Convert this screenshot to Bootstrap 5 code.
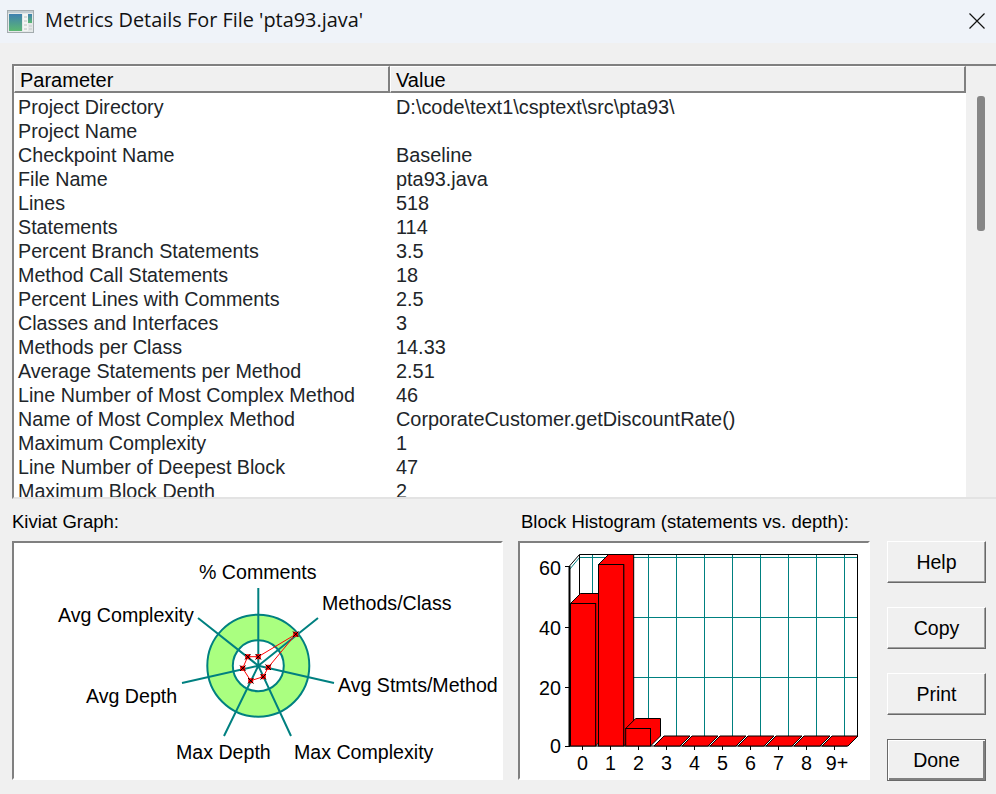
<!DOCTYPE html>
<html lang="en">
<head>
<meta charset="utf-8">
<title>Metrics Details</title>
<link href="https://cdn.jsdelivr.net/npm/bootstrap@5.3.0/dist/css/bootstrap.min.css" rel="stylesheet">
<style>
html,body{height:794px;overflow:hidden}
body{background:#f0f0f0;color:#000;font-family:"Liberation Sans",Arial,sans-serif;font-size:18.5px;line-height:24px}
.dlg-title{height:43px;background:#eff3f9;padding:0 7px}
.dlg-title .ttl{font-family:"Open Sans","Noto Sans",sans-serif;font-size:19.9px;color:#111;margin-left:11px;margin-top:-3px}
.dlg-close{margin-left:auto;margin-right:4px;margin-top:-2px}
.grid-frame{height:435px;margin:21px 0 0 12px;border-top:2px solid #808080;border-left:2px solid #808080;border-bottom:2px solid #e3e3e3;overflow:hidden}
.grid-main{width:952px;background:#fff;height:100%;overflow:hidden}
.grid-scroll{flex:1;background:#f0f0f0;padding:30px 11px 0 11px}
.grid-thumb{height:135px;background:#868686;border-radius:3px}
.grid-head{height:27px;background:#f0f0f0}
.hd{height:27px;font-size:20px;border-top:1px solid #fff;border-left:1px solid #fff;border-right:2px solid #808080;border-bottom:2px solid #808080;padding-left:5px;line-height:26px}
.hd-a{width:376px}
.hd-b{flex:1}
.grid-rows{padding-top:2px}
.grid-rows .table{--bs-table-bg:transparent;margin:0;font-size:19.9px;line-height:24px;table-layout:fixed}
.grid-rows td{padding:0;border:0;height:24px;white-space:nowrap}
.grid-rows td:first-child{width:382px;padding-left:4px;font-size:19.7px}
.lbl{height:42px;line-height:24px;padding-left:12px;padding-top:11px}
.lbl-a{width:518px}
.lbl-b{padding-left:3px}
.well{height:239px;border-top:2px solid #808080;border-left:2px solid #808080;border-right:2px solid #fff;border-bottom:2px solid #fff;background:#fff;overflow:hidden}
.well svg{display:block}
.well-a{width:491px;margin-left:12px}
.well-b{width:352px;margin-left:15px}
.side{margin-left:17px;width:99px}
.side .btn{--bs-btn-border-radius:0;width:99px;height:42px;padding:0;background:#f0f0f0;color:#000;font-size:19.5px;line-height:35px;border:1px solid;border-color:#fff #696969 #696969 #fff;box-shadow:inset -1px -1px 0 #a0a0a0,inset 1px 1px 0 #f0f0f0}
.side .btn.dflt{border:1px solid #696969;box-shadow:inset 1px 1px 0 #fff,inset -2px -2px 0 #808080}
svg text{font-family:"Liberation Sans",Arial,sans-serif;fill:#000}
</style>
</head>
<body>
<div class="dlg-title d-flex align-items-center">
  <svg width="27" height="23" viewBox="0 0 27 23"><defs><linearGradient id="ig" x1="0" y1="0" x2="0" y2="1"><stop offset="0" stop-color="#3f80b0"/><stop offset="1" stop-color="#5cb872"/></linearGradient></defs><rect x=".5" y=".5" width="26" height="22" fill="#e4e8e8" stroke="#a3abae"/><rect x="1" y="1" width="25" height="2" fill="#c3cdd2"/><rect x="2" y="4" width="13" height="17" fill="url(#ig)"/><rect x="16" y="4" width="5" height="17" fill="#f3f5f3"/><path d="M17 7h3M17 11h3M17 15h3M17 19h3" stroke="#b9c0c0"/><rect x="21" y="4" width="4" height="9" fill="url(#ig)"/><path d="M22 16h3M22 19h3" stroke="#c3c9c9"/></svg>
  <span class="ttl">Metrics Details For File 'pta93.java'</span>
  <svg class="dlg-close" width="16" height="16" viewBox="0 0 16 16"><path d="M.5.5l15 15M15.500.5l-15 15" stroke="#111" stroke-width="1.200" fill="none"/></svg>
</div>
<div class="grid-frame d-flex">
  <div class="grid-main">
    <div class="grid-head d-flex"><div class="hd hd-a">Parameter</div><div class="hd hd-b">Value</div></div>
    <div class="grid-rows">
      <table class="table table-borderless">
        <tbody>
          <tr><td>Project Directory</td><td>D:\code\text1\csptext\src\pta93\</td></tr>
          <tr><td>Project Name</td><td></td></tr>
          <tr><td>Checkpoint Name</td><td>Baseline</td></tr>
          <tr><td>File Name</td><td>pta93.java</td></tr>
          <tr><td>Lines</td><td>518</td></tr>
          <tr><td>Statements</td><td>114</td></tr>
          <tr><td>Percent Branch Statements</td><td>3.5</td></tr>
          <tr><td>Method Call Statements</td><td>18</td></tr>
          <tr><td>Percent Lines with Comments</td><td>2.5</td></tr>
          <tr><td>Classes and Interfaces</td><td>3</td></tr>
          <tr><td>Methods per Class</td><td>14.33</td></tr>
          <tr><td>Average Statements per Method</td><td>2.51</td></tr>
          <tr><td>Line Number of Most Complex Method</td><td>46</td></tr>
          <tr><td>Name of Most Complex Method</td><td>CorporateCustomer.getDiscountRate()</td></tr>
          <tr><td>Maximum Complexity</td><td>1</td></tr>
          <tr><td>Line Number of Deepest Block</td><td>47</td></tr>
          <tr><td>Maximum Block Depth</td><td>2</td></tr>
        </tbody>
      </table>
    </div>
  </div>
  <div class="grid-scroll"><div class="grid-thumb"></div></div>
</div>
<div class="d-flex">
  <div class="lbl lbl-a">Kiviat Graph:</div>
  <div class="lbl lbl-b">Block Histogram (statements vs. depth):</div>
</div>
<div class="d-flex">
  <div class="well well-a">
    <svg width="487" height="235" viewBox="14 543 487 235">
      <circle cx="258.300" cy="665.700" r="51" fill="#aaff80" stroke="#008080" stroke-width="2"/>
      <circle cx="258.300" cy="665.700" r="25.500" fill="#fff" stroke="#008080" stroke-width="2"/>
      <g stroke="#008080" stroke-width="2"><path d="M258.300 665.700V588M258.300 665.700L318 618M258.300 665.700L334 683M258.300 665.700L291 736M258.300 665.700L224 736M258.300 665.700L182 683M258.300 665.700L198 618"/></g>
      <polygon points="258.300,656.700 295.700,634.300 268.300,667.300 263.300,676.700 250.700,680.700 242.700,668.300 247.700,656.700" fill="none" stroke="#f00" stroke-width="1"/>
      <g fill="#f00"><rect x="255.800" y="654.200" width="5" height="5"/><rect x="293.200" y="631.800" width="5" height="5"/><rect x="265.800" y="664.800" width="5" height="5"/><rect x="260.800" y="674.200" width="5" height="5"/><rect x="248.200" y="678.200" width="5" height="5"/><rect x="240.200" y="665.800" width="5" height="5"/><rect x="245.200" y="654.200" width="5" height="5"/></g>
      <g fill="none" stroke="#000" stroke-width="1">
        <path d="M255.500 654l5.500 5.500M255.500 659.500l5.500-5.500M293 631.500l5.500 5.500M293 637l5.500-5.500M265.500 664.500l5.500 5.500M265.500 670l5.500-5.500M260.500 674l5.500 5.500M260.500 679.500l5.500-5.500M248 678l5.500 5.500M248 683.500l5.500-5.500M240 665.500l5.500 5.500M240 671l5.500-5.500M245 654l5.500 5.500M245 659.500l5.500-5.500"/>
      </g>
      <g font-size="19.600">
        <text x="199" y="579">% Comments</text>
        <text x="322" y="610">Methods/Class</text>
        <text x="58" y="622">Avg Complexity</text>
        <text x="338" y="692">Avg Stmts/Method</text>
        <text x="86" y="703">Avg Depth</text>
        <text x="176" y="759">Max Depth</text>
        <text x="294" y="759">Max Complexity</text>
      </g>
    </svg>
  </div>
  <div class="well well-b">
    <svg width="348" height="235" viewBox="520 543 348 235">
      <g stroke="#008080" stroke-width="1" fill="none">
        <path d="M579.500 557.500H857.500M579.500 617.500H857.500M579.500 677.500H857.500M569.500 569.500L579.500 557.500"/>
        <path d="M592.500 554V736M620.500 554V736M648.500 554V736M676.500 554V736M704.500 554V736M732.500 554V736M760.500 554V736M788.500 554V736M816.500 554V736M844.500 554V736"/>
      </g>
      <path d="M569.500 746V566L579.500 554.500H857.500V736.500L847 746M579.500 554.500V736.500" fill="none" stroke="#000" stroke-width="1"/>
      <path d="M569.500 746H847" stroke="#000" stroke-width="1"/>
      <g stroke="#000" stroke-width="1" fill="#f00">
        <path d="M654 746l10-10h26l-10 10zM682 746l10-10h26l-10 10zM710 746l10-10h26l-10 10zM738 746l10-10h26l-10 10zM766 746l10-10h26l-10 10zM794 746l10-10h26l-10 10zM822 746l10-10h26l-10 10z"/>
        <path d="M570.500 603.500l10-10h25v142.500l-10 10v-142.500z"/>
        <rect x="570.500" y="603.500" width="25.200" height="142.500"/>
        <path d="M598.500 564.500l10-10h25.200v181.500l-10 10v-181.500z"/>
        <rect x="598.500" y="564.500" width="25.200" height="181.500"/>
        <path d="M625.700 728.500l10-10h24.800v17.500l-10 10v-17.500z"/>
        <rect x="625.700" y="728.500" width="24.800" height="17.500"/>
      </g>
      <path d="M569.500 566V746" stroke="#000" stroke-width="2"/>
      <path d="M565 566.500h5M565 627.500h5M565 687.500h5M565 746.500h5M582.500 746v4M610.500 746v4M638.500 746v4M666.500 746v4M694.500 746v4M722.500 746v4M750.500 746v4M778.500 746v4M806.500 746v4M834.500 746v4" stroke="#000" stroke-width="1"/>
      <g font-size="19.700">
        <g text-anchor="end"><text x="561" y="575">60</text><text x="561" y="635">40</text><text x="561" y="695">20</text><text x="561" y="753">0</text></g>
        <g text-anchor="middle"><text x="582.500" y="770">0</text><text x="610.500" y="770">1</text><text x="638.500" y="770">2</text><text x="666.500" y="770">3</text><text x="694.500" y="770">4</text><text x="722.500" y="770">5</text><text x="750.500" y="770">6</text><text x="778.500" y="770">7</text><text x="806.500" y="770">8</text><text x="837" y="770">9+</text></g>
      </g>
    </svg>
  </div>
  <div class="side d-flex flex-column gap-4">
    <button type="button" class="btn">Help</button>
    <button type="button" class="btn">Copy</button>
    <button type="button" class="btn">Print</button>
    <button type="button" class="btn dflt">Done</button>
  </div>
</div>
<script src="https://cdn.jsdelivr.net/npm/bootstrap@5.3.0/dist/js/bootstrap.bundle.min.js"></script>
</body>
</html>
